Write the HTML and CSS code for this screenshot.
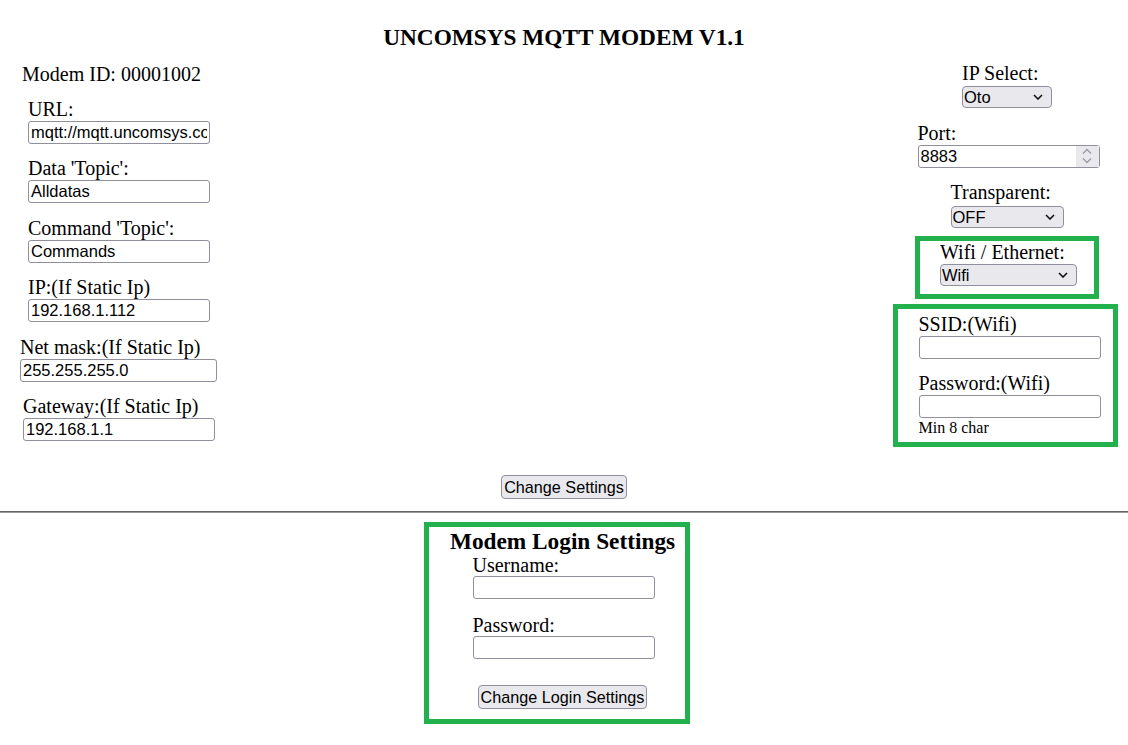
FILE: index.html
```html
<!DOCTYPE html>
<html lang="en">
<head>
  <meta charset="UTF-8" />
  <title>UNCOMSYS MQTT MODEM</title>
  <link rel="stylesheet" href="styles.css">
</head>
<body>
  <h1 class="title">UNCOMSYS MQTT MODEM V1.1</h1>

  <form id="settings">
    <div class="columns">
      <!-- Left: MQTT + network -->
      <div class="left">
        <div class="modem-id">Modem ID: 00001002</div>

        <div class="field">
          <label for="url">URL:</label>
          <input type="text" id="url" value="mqtt://mqtt.uncomsys.com" />
        </div>
        <div class="field">
          <label for="topic">Data 'Topic':</label>
          <input type="text" id="topic" value="Alldatas" />
        </div>
        <div class="field">
          <label for="cmd">Command 'Topic':</label>
          <input type="text" id="cmd" value="Commands" />
        </div>
        <div class="field">
          <label for="ip">IP:(If Static Ip)</label>
          <input type="text" id="ip" value="192.168.1.112" />
        </div>
        <div class="field mask">
          <label for="mask">Net mask:(If Static Ip)</label>
          <input type="text" id="mask" value="255.255.255.0" />
        </div>
        <div class="field gateway">
          <label for="gw">Gateway:(If Static Ip)</label>
          <input type="text" id="gw" value="192.168.1.1" />
        </div>
      </div>

      <!-- Right: connection options -->
      <div class="right">
        <div class="opt">
          <label for="ipsel">IP Select:</label>
          <select id="ipsel" class="sel-ip">
            <option>Oto</option>
            <option>Static</option>
          </select>
        </div>

        <div class="opt port">
          <label for="port">Port:</label>
          <div class="num">
            <input type="text" id="port" value="8883" />
            <span class="spin">
              <svg width="12" height="18" viewBox="0 0 12 18">
                <path d="M2 6.5 L6 2.5 L10 6.5" fill="none" stroke="#9a9aa6" stroke-width="1.3"/>
                <path d="M2 11.5 L6 15.5 L10 11.5" fill="none" stroke="#9a9aa6" stroke-width="1.3"/>
              </svg>
            </span>
          </div>
        </div>

        <div class="opt transparent">
          <label for="trans">Transparent:</label>
          <select id="trans" class="sel-trans">
            <option>OFF</option>
            <option>ON</option>
          </select>
        </div>

        <div class="opt box wifi-box">
          <label for="mode">Wifi / Ethernet:</label>
          <select id="mode" class="sel-mode">
            <option>Wifi</option>
            <option>Ethernet</option>
          </select>
        </div>

        <div class="box ssid-box">
          <div class="field">
            <label for="ssid">SSID:(Wifi)</label>
            <input type="text" id="ssid" />
          </div>
          <div class="field last">
            <label for="wpass">Password:(Wifi)</label>
            <input type="password" id="wpass" />
          </div>
          <div class="hint">Min 8 char</div>
        </div>
      </div>
    </div>

    <div class="actions">
      <button type="button">Change Settings</button>
    </div>
  </form>

  <hr />

  <div class="box login-box">
    <h2 class="login-title">Modem Login Settings</h2>
    <div class="login-fields">
      <div class="field">
        <label for="user">Username:</label>
        <input type="text" id="user" />
      </div>
      <div class="field">
        <label for="lpass">Password:</label>
        <input type="password" id="lpass" />
      </div>
    </div>
    <div class="login-action">
      <button type="button">Change Login Settings</button>
    </div>
  </div>
</body>
</html>
```

FILE: styles.css
```css
body {
  margin: 0;
  font-family: "Liberation Serif", "Times New Roman", serif;
  font-size: 20px;
  color: #000;
  background: #fff;
}

.title {
  margin: 23px 0 0;
  font-size: 23.3px;
  line-height: 28px;
  text-align: center;
}

label,
.modem-id {
  display: block;
  line-height: 23px;
}

input,
select,
button {
  font-family: "Liberation Sans", Arial, sans-serif;
  font-size: 16.5px;
  color: #000;
  box-sizing: border-box;
}

input[type="text"],
input[type="password"] {
  display: block;
  width: 182px;
  height: 23px;
  padding: 0 2px;
  border: 1px solid #8f8f9d;
  border-radius: 3px;
  background: #fff;
}

select {
  display: block;
  height: 22px;
  padding: 0 0 0 1px;
  line-height: 20px;
  border: 1px solid #8f8f9d;
  border-radius: 4px;
  appearance: none;
  -webkit-appearance: none;
  background: #e9e9ed url("data:image/svg+xml,%3Csvg xmlns='http://www.w3.org/2000/svg' width='10' height='6'%3E%3Cpath d='M1 1l4 4 4-4' fill='none' stroke='%23111' stroke-width='1.6'/%3E%3C/svg%3E") no-repeat right 8px center;
}

button {
  height: 24px;
  padding: 1px 2px;
  font-size: 16.2px;
  line-height: 20px;
  white-space: nowrap;
  border: 1px solid #8f8f9d;
  border-radius: 4px;
  background: #e9e9ed;
}

.columns {
  display: flex;
  justify-content: space-between;
  margin-top: 10.5px;
}

/* left column */
.left {
  padding-left: 20px;
}

.modem-id {
  margin: 1px 0 12px 2px;
}

.left .field {
  margin: 0 0 13.5px 8px;
}

.left .field.mask {
  margin-left: 0;
}

.left .field.mask input {
  width: 197px;
}

.left .field.gateway {
  margin-left: 3px;
}

.left .field.gateway input {
  width: 192px;
}

/* right column */
.right {
  width: 242px;
  display: flex;
  flex-direction: column;
  align-items: center;
}

.opt {
  margin-bottom: 13.5px;
}

.opt select {
  margin-top: 1.5px;
}

.sel-ip { width: 90px; }
.sel-trans { width: 113px; }
.sel-mode { width: 137px; }

.port {
  margin-left: 3px;
}

.transparent {
  margin-bottom: 8px;
}

.num {
  position: relative;
}

.num input[type="text"] {
  width: 182px;
}

.spin {
  position: absolute;
  right: 1px;
  top: 1px;
  bottom: 1px;
  width: 23px;
  background: #e9e9ed;
  display: flex;
  align-items: center;
  justify-content: center;
}

.box {
  border: 5px solid #22b14c;
  box-sizing: border-box;
}

.wifi-box {
  padding: 0 17px 8px 20px;
  margin-bottom: 0;
}

.wifi-box select {
  margin-top: 0.5px;
}

.ssid-box {
  margin-top: 5px;
  margin-left: -4px;
  padding: 3.5px 12px 5px 21px;
}

.ssid-box .field {
  margin-bottom: 13.5px;
}

.ssid-box .field.last {
  margin-bottom: 1px;
}

.hint {
  font-size: 16px;
  line-height: 18px;
}

/* buttons + divider */
.actions {
  margin-top: 20.5px;
  display: flex;
  justify-content: center;
}

hr {
  margin: 11.5px 0 9px;
  border: 0;
  border-top: 1px solid #666;
  border-bottom: 1px solid #9a9a9a;
  height: 0;
}

/* login box */
.login-box {
  width: 266px;
  margin-left: calc(50% - 140px);
  padding: 0 0 10px 11px;
  text-align: center;
}

.login-title {
  margin: 0;
  font-size: 23.3px;
  line-height: 28px;
}

.login-fields {
  display: inline-block;
  text-align: left;
  margin-left: 2px;
}

.login-fields label {
  line-height: 21.5px;
}

.login-fields .field + .field {
  margin-top: 15px;
}

.login-fields .field + .field label {
  line-height: 22px;
}

.login-action {
  margin-top: 26px;
  display: flex;
  justify-content: center;
}
```
